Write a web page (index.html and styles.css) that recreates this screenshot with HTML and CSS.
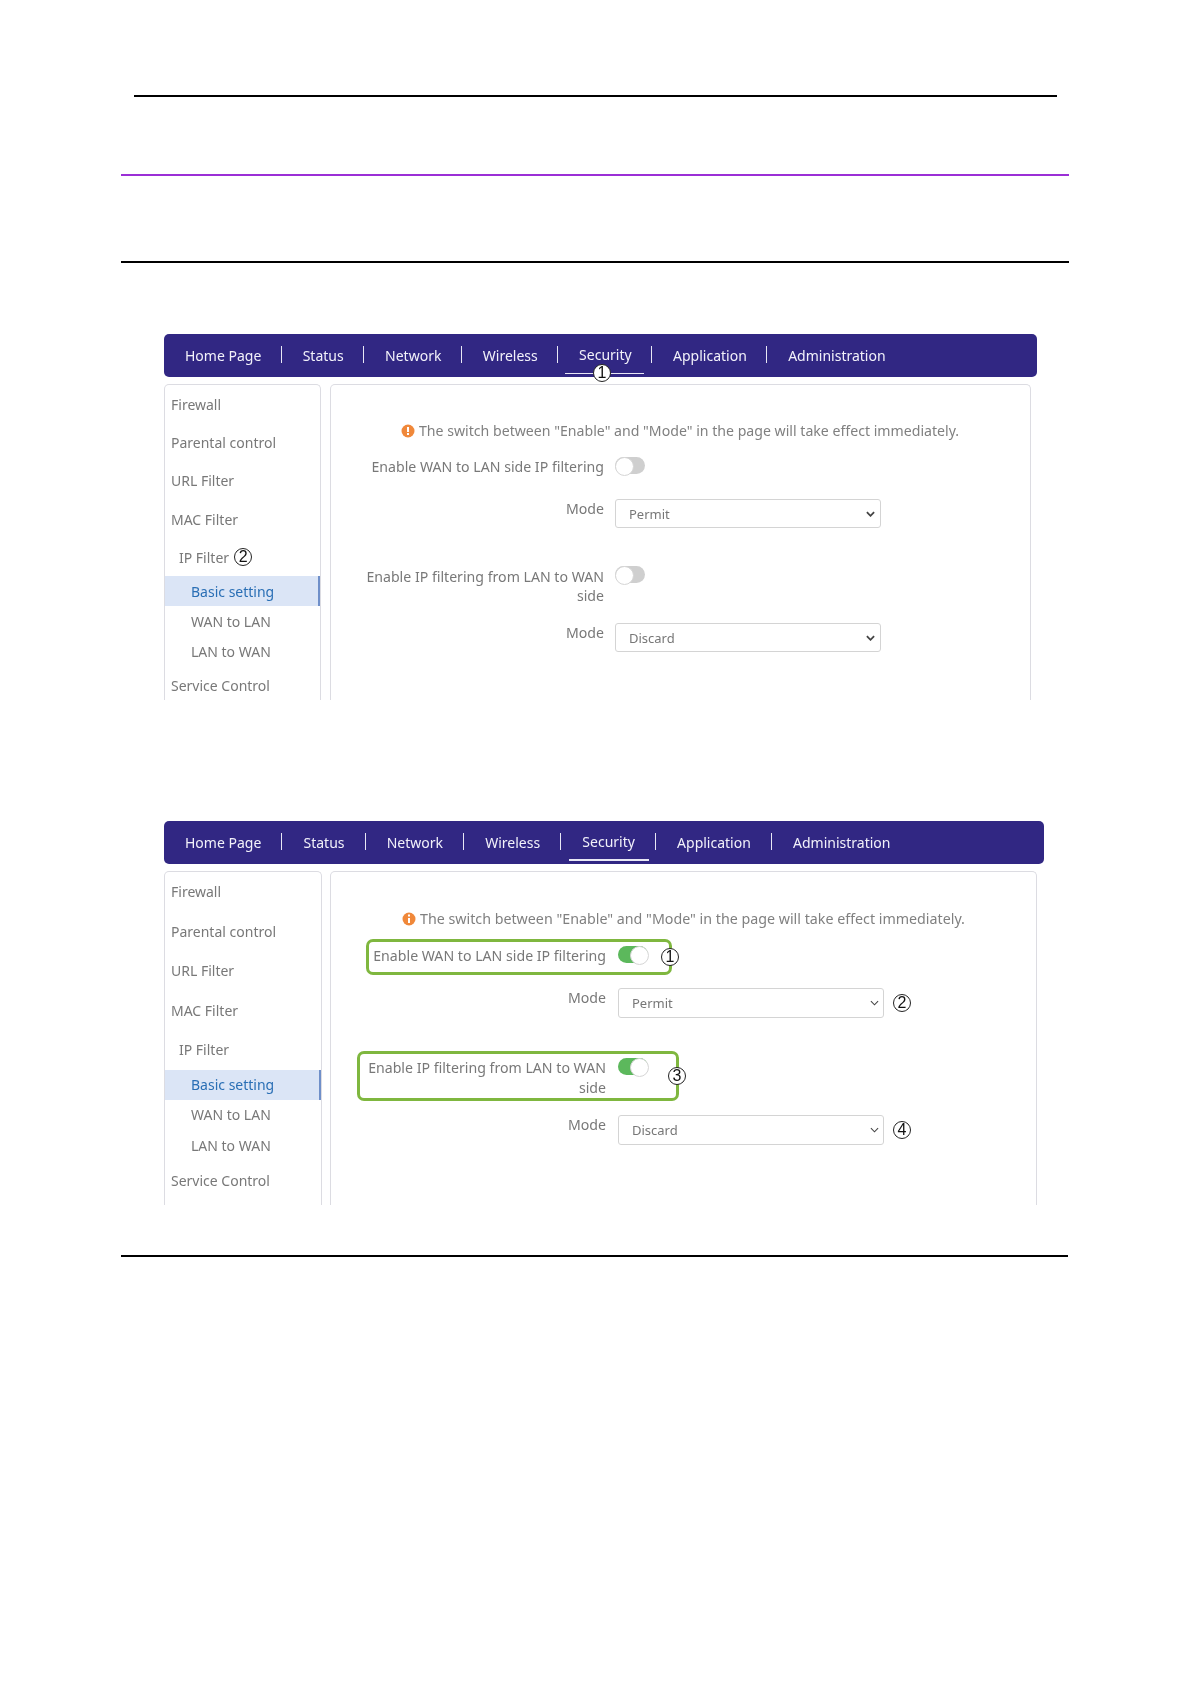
FILE: index.html
```html
<!DOCTYPE html>
<html lang="en">
<head>
<meta charset="utf-8">
<title>IP Filter</title>
<link rel="stylesheet" href="styles.css">
</head>
<body>
<div class="doc">
  <hr class="rule rule-head">
  <hr class="rule rule-purple">
  <hr class="rule rule-black">

  <section class="shot shot-a">
    <nav class="nav">
      <a class="nav-item">Home Page</a>
      <a class="nav-item">Status</a>
      <a class="nav-item">Network</a>
      <a class="nav-item">Wireless</a>
      <a class="nav-item active">Security</a>
      <a class="nav-item">Application</a>
      <a class="nav-item last">Administration</a>
    </nav>
    <div class="body">
      <aside class="side">
        <div class="side-item">Firewall</div>
        <div class="side-item">Parental control</div>
        <div class="side-item">URL Filter</div>
        <div class="side-item">MAC Filter</div>
        <div class="side-item ip">IP Filter <span class="num">2</span></div>
        <div class="sub current">Basic setting</div>
        <div class="sub">WAN to LAN</div>
        <div class="sub">LAN to WAN</div>
        <div class="side-item">Service Control</div>
      </aside>
      <main class="panel">
        <p class="notice"><svg class="info" viewBox="0 0 14 14"><circle cx="7" cy="7" r="6.5"/><rect x="6" y="3" width="2" height="5"/><rect x="6" y="9" width="2" height="2"/></svg>The switch between "Enable" and "Mode" in the page will take effect immediately.</p>
        <div class="row row-1">
          <label class="lbl">Enable WAN to LAN side IP filtering</label>
          <span class="switch"></span>
        </div>
        <div class="row row-2">
          <label class="lbl">Mode</label>
          <div class="select"><span>Permit</span><svg class="chev" viewBox="0 0 10 6"><path d="M1 1l4 4 4-4"/></svg></div>
        </div>
        <div class="row row-3">
          <label class="lbl">Enable IP filtering from LAN to WAN side</label>
          <span class="switch"></span>
        </div>
        <div class="row row-4">
          <label class="lbl">Mode</label>
          <div class="select"><span>Discard</span><svg class="chev" viewBox="0 0 10 6"><path d="M1 1l4 4 4-4"/></svg></div>
        </div>
      </main>
    </div>
    <span class="num mark mark-nav">1</span>
  </section>

  <section class="shot shot-b">
    <nav class="nav">
      <a class="nav-item">Home Page</a>
      <a class="nav-item">Status</a>
      <a class="nav-item">Network</a>
      <a class="nav-item">Wireless</a>
      <a class="nav-item active">Security</a>
      <a class="nav-item">Application</a>
      <a class="nav-item last">Administration</a>
    </nav>
    <div class="body">
      <aside class="side">
        <div class="side-item">Firewall</div>
        <div class="side-item">Parental control</div>
        <div class="side-item">URL Filter</div>
        <div class="side-item">MAC Filter</div>
        <div class="side-item ip">IP Filter</div>
        <div class="sub current">Basic setting</div>
        <div class="sub">WAN to LAN</div>
        <div class="sub">LAN to WAN</div>
        <div class="side-item">Service Control</div>
      </aside>
      <main class="panel">
        <p class="notice"><svg class="info" viewBox="0 0 14 14"><circle cx="7" cy="7" r="6.5"/><rect x="6" y="2.5" width="2" height="2"/><rect x="6" y="6" width="2" height="5"/></svg>The switch between "Enable" and "Mode" in the page will take effect immediately.</p>
        <div class="row row-1">
          <label class="lbl">Enable WAN to LAN side IP filtering</label>
          <span class="switch on"></span>
        </div>
        <div class="row row-2">
          <label class="lbl">Mode</label>
          <div class="select"><span>Permit</span><svg class="chev" viewBox="0 0 10 6"><path d="M1 1l4 4 4-4"/></svg></div>
          <span class="num">2</span>
        </div>
        <div class="row row-3">
          <label class="lbl">Enable IP filtering from LAN to WAN side</label>
          <span class="switch on"></span>
        </div>
        <div class="row row-4">
          <label class="lbl">Mode</label>
          <div class="select"><span>Discard</span><svg class="chev" viewBox="0 0 10 6"><path d="M1 1l4 4 4-4"/></svg></div>
          <span class="num">4</span>
        </div>
      </main>
    </div>
    <span class="callout callout-1"></span>
    <span class="callout callout-3"></span>
    <span class="num mark mark-1">1</span>
    <span class="num mark mark-3">3</span>
  </section>

  <hr class="rule rule-foot">
</div>
</body>
</html>
```
FILE: styles.css
```css
* { box-sizing: border-box; }
html, body { margin: 0; padding: 0; background: #fff; }
body { font-family: "Noto Sans", "Open Sans", sans-serif; }
.doc { height: 1684px; padding-top: 95px; overflow: hidden; }

.rule { display: block; border: 0; height: 2px; margin: 0; background: #000; }
.rule-head { margin-left: 134px; width: 923px; }
.rule-purple { margin: 77px 0 0 121px; width: 948px; background: #9b2fd6; }
.rule-black { margin: 85px 0 0 121px; width: 948px; }
.rule-foot { margin: 50px 0 0 121px; width: 947px; }

.shot { position: relative; margin-left: 164px; overflow: hidden; color: #787878; filter: blur(.3px); }
.shot-a { width: 873px; height: 366px; margin-top: 71px; --item: 38.3px; --sub: 30px; --side: 157px; --panel: 701px; --gap: 9px; --nav-gap: 20.7px; --text: 14.13px; --label: 14.13px; }
.shot-b { width: 880px; height: 384px; margin-top: 121px; --item: 39.5px; --sub: 30.3px; --side: 158px; --panel: 707px; --gap: 8px; --nav-gap: 21.1px; --text: 14.25px; --label: 14.15px; }

.nav { display: flex; align-items: center; height: 43px; padding-left: 21px; background: #312783; border-radius: 5px; color: #f2f1fa; font-size: 14px; }
.nav-item { position: relative; height: 100%; display: flex; align-items: center; padding-right: var(--nav-gap); margin-right: var(--nav-gap); white-space: nowrap; }
.nav-item::after { content: ""; position: absolute; right: 0; top: 12px; height: 17px; width: 1px; background: #e8e7f5; }
.nav-item.last::after { display: none; }
.nav-item.active { padding-bottom: 2px; }
.nav-item.active::before { content: ""; position: absolute; left: -14px; right: 8px; bottom: 3px; height: 1px; background: #e8e7f5; }
.shot-b .nav-item.active::before { height: 2px; left: -13px; right: 7px; }

.body { display: flex; gap: var(--gap); margin-top: 7px; align-items: flex-start; }
.side, .panel { border: 1px solid #dcdce2; border-bottom: 0; border-radius: 5px 5px 0 0; height: 340px; }
.side { width: var(--side); font-size: 14px; flex: none; }
.panel { width: var(--panel); flex: none; padding: 36px 0 0 22px; font-size: var(--text); }
.shot-b .panel { padding-top: 37px; padding-left: 23px; }
.side-item { height: var(--item); padding-left: 6px; display: flex; align-items: center; white-space: nowrap; gap: 5px; }
.side-item.ip { padding-left: 14px; }
.sub { height: var(--sub); padding-left: 26px; display: flex; align-items: center; }
.sub.current { background: #dbe5f6; color: #2a6fb5; border-right: 2px solid #6f8fc9; }

.notice { margin: 0 0 0 48px; height: 20px; line-height: 20px; display: flex; align-items: center; white-space: nowrap; color: #808080; }
.info { width: 14px; height: 14px; margin-right: 4px; flex: none; }
.info circle { fill: #f0883a; }
.info rect { fill: #fff; }

.row { display: flex; align-items: flex-start; }
.row-1 { margin-top: 16px; }
.row-2 { margin-top: 22px; }
.row-3 { margin-top: 38px; }
.row-4 { margin-top: 18px; }
.shot-b .row-1 { margin-top: 17px; }
.shot-b .row-2 { margin-top: 21px; }
.shot-b .row-3 { margin-top: 40px; }
.shot-b .row-4 { margin-top: 16px; }

.lbl { width: 251px; flex: none; text-align: right; line-height: 20px; margin-right: 11px; font-size: var(--label); }
.shot-a .row-3 .lbl { padding-top: 1px; line-height: 19px; }
.shot-b .lbl { line-height: 20.5px; width: 252px; margin-right: 12px; }

.switch { position: relative; display: block; width: 30px; height: 17px; border-radius: 9px; background: #cfcfcf; flex: none; }
.switch::after { content: ""; position: absolute; left: 0; top: 0; width: 17px; height: 17px; border-radius: 50%; background: #fff; border: 1px solid #d5d5d5; }
.switch.on { background: #5cb85c; }
.switch.on::after { left: 12px; }

.select { width: 266px; height: 29px; flex: none; border: 1px solid #d4d4d4; border-radius: 3px; display: flex; align-items: center; justify-content: space-between; padding: 0 5px 0 13px; font-size: 13px; background: #fff; color: #777; }
.shot-b .select { height: 30px; padding-right: 4px; }
.chev { width: 9px; height: 6px; fill: none; stroke: #444; stroke-width: 2; }
.shot-b .chev { stroke-width: 1.2; }

.num { display: inline-flex; align-items: center; justify-content: center; width: 18px; height: 18px; border: 1px solid #222; border-radius: 50%; background: #fff; color: #111; font: 16px/1 "Liberation Sans", sans-serif; flex: none; }
.shot-b .row-2 .num, .shot-b .row-4 .num { margin: 6px 0 0 9px; }
.mark { position: absolute; }
.mark-nav { left: 429px; top: 30px; }
.mark-1 { left: 497px; top: 127px; }
.mark-3 { left: 504px; top: 246px; }

.callout { position: absolute; border: 3.5px solid #7fb73f; border-radius: 7px; }
.callout-1 { left: 202px; top: 118px; width: 306px; height: 36px; }
.callout-3 { left: 193px; top: 230px; width: 322px; height: 50px; }
```
